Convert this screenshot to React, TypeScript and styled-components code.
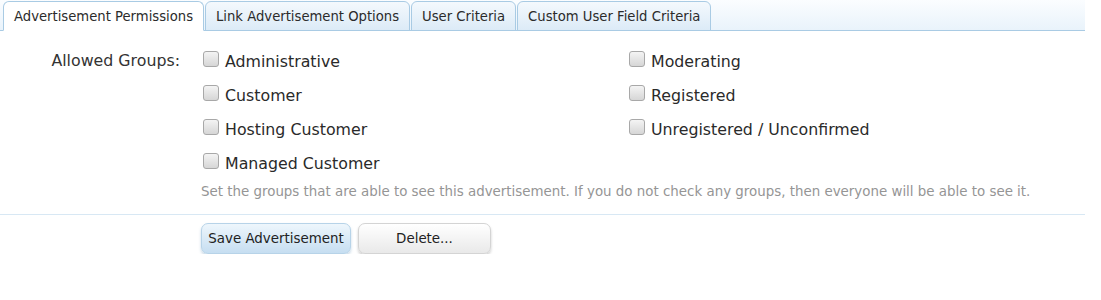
import * as React from "react";
import styled, { createGlobalStyle } from "styled-components";

const GlobalStyle = createGlobalStyle`
  body {
    margin: 0;
    background: #ffffff;
    font-family: "DejaVu Sans", Verdana, sans-serif;
    color: #222;
  }
`;

const Page = styled.div`
  width: 1085px;
`;

const TabStrip = styled.div`
  display: flex;
  align-items: flex-end;
  height: 31px;
  padding-left: 3px;
  border-bottom: 1px solid #a9cbe4;
  background: linear-gradient(to bottom, #fbfdff, #e9f3fb);
  box-sizing: border-box;
`;

const Tab = styled.div<{ $active?: boolean }>`
  height: 30px;
  margin-bottom: -1px;
  padding: 0 10px;
  display: flex;
  align-items: center;
  font-size: 13.2px;
  color: #2b2b2b;
  border: 1px solid #a9cbe4;
  border-bottom: ${(p) => (p.$active ? "1px solid #ffffff" : "1px solid #a9cbe4")};
  border-radius: 6px 6px 0 0;
  background: ${(p) =>
    p.$active ? "#ffffff" : "linear-gradient(to bottom, #f4f9fd, #dcebf7)"};
  box-sizing: border-box;
  & + & {
    margin-left: 1px;
  }
`;

const Form = styled.div`
  padding-top: 14px;
`;

const FormRow = styled.div`
  display: grid;
  grid-template-columns: 180px 1fr;
  column-gap: 21px;
  padding-bottom: 13px;
  border-bottom: 1px solid #d8e8f4;
`;

const RowLabel = styled.div`
  text-align: right;
  font-size: 15.8px;
  line-height: 20px;
  padding-top: 6px;
  color: #333;
`;

const OptionGrid = styled.div`
  display: grid;
  grid-template-columns: 426px 426px;
  grid-auto-rows: 34px;
`;

const Option = styled.label`
  display: flex;
  align-items: flex-start;
  font-size: 15.8px;
  line-height: 20px;
  color: #2a2a2a;
`;

const Box = styled.span`
  width: 14px;
  height: 14px;
  margin: 6px 6px 0 2px;
  border: 1px solid #a8a8a8;
  border-radius: 3px;
  background: linear-gradient(to bottom, #f4f4f4, #d6d6d6);
  flex: none;
`;

const OptionText = styled.span`
  padding-top: 7px;
`;

const Explain = styled.div`
  margin-top: 2px;
  font-size: 13.4px;
  line-height: 18px;
  color: #959595;
`;

const ButtonRow = styled.div`
  display: flex;
  gap: 7px;
  padding: 8px 0 0 201px;
`;

const Button = styled.button<{ $primary?: boolean }>`
  height: 31px;
  width: ${(p) => (p.$primary ? "150px" : "133px")};
  font-family: "DejaVu Sans", Verdana, sans-serif;
  font-size: 13.4px;
  color: #222;
  border: 1px solid ${(p) => (p.$primary ? "#b7d3e8" : "#d4d4d4")};
  border-radius: 7px;
  background: ${(p) =>
    p.$primary
      ? "linear-gradient(to bottom, #eef6fc, #c6def1)"
      : "linear-gradient(to bottom, #ffffff, #e9e9e9)"};
  box-shadow: ${(p) =>
    p.$primary ? "0 2px 3px rgba(90, 140, 180, 0.35)" : "0 2px 3px rgba(0, 0, 0, 0.2)"};
  padding: 0;
`;

const tabs = [
  "Advertisement Permissions",
  "Link Advertisement Options",
  "User Criteria",
  "Custom User Field Criteria",
];

// row by row, two columns
const groups = [
  ["Administrative", "Moderating"],
  ["Customer", "Registered"],
  ["Hosting Customer", "Unregistered / Unconfirmed"],
  ["Managed Customer", null],
];

export default function App() {
  return (
    <Page>
      <GlobalStyle />
      <TabStrip>
        {tabs.map((t, i) => (
          <Tab key={t} $active={i === 0}>
            {t}
          </Tab>
        ))}
      </TabStrip>
      <Form>
        <FormRow>
          <RowLabel>Allowed Groups:</RowLabel>
          <div>
            <OptionGrid>
              {groups.flat().map((g, i) =>
                g ? (
                  <Option key={i}>
                    <Box />
                    <OptionText>{g}</OptionText>
                  </Option>
                ) : (
                  <span key={i} />
                )
              )}
            </OptionGrid>
            <Explain>
              Set the groups that are able to see this advertisement. If you do not check any
              groups, then everyone will be able to see it.
            </Explain>
          </div>
        </FormRow>
        <ButtonRow>
          <Button $primary>Save Advertisement</Button>
          <Button>Delete...</Button>
        </ButtonRow>
      </Form>
    </Page>
  );
}
